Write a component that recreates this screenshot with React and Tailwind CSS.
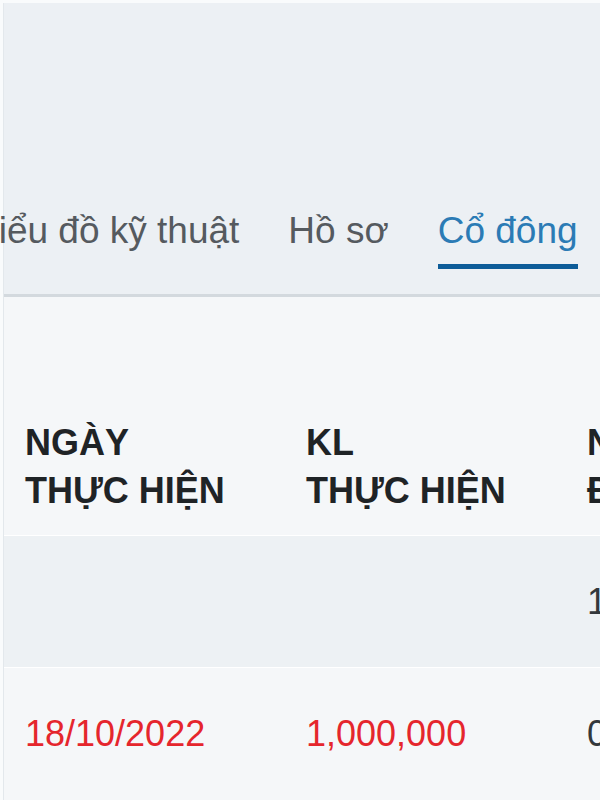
import React from 'react'

const tabs = [
  { label: 'Biểu đồ kỹ thuật', active: false },
  { label: 'Hồ sơ', active: false },
  { label: 'Cổ đông', active: true },
]

const rows = [
  { date: '', volume: '', extra: '1' },
  { date: '18/10/2022', volume: '1,000,000', extra: '0' },
]

const App = () => {
  return (
    <div className="w-[600px] h-[800px] overflow-hidden bg-[#f9fbfc] pt-[3px] pl-[3px] font-['Liberation_Sans',Arial,sans-serif]">
      <div className="border-l border-[#e3e8ec] h-full flex flex-col">
        {/* tabs */}
        <div className="bg-[#ecf0f4] pt-[208px] pb-[25px] border-b-[3px] border-[#d3d9de]">
          <div className="flex items-start gap-[49px] ml-[-30px] whitespace-nowrap">
            {tabs.map((tab) => (
              <div key={tab.label} className="flex flex-col">
                <span
                  className={`text-[37px] leading-[40px] ${tab.active ? 'text-[#2b7bb5]' : 'text-[#555a5f]'}`}
                >
                  {tab.label}
                </span>
                <div className={`mt-[13px] h-[5px] ${tab.active ? 'bg-[#0d5c98]' : 'bg-transparent'}`} />
              </div>
            ))}
          </div>
        </div>

        {/* table */}
        <div className="flex-1 bg-[#f5f7f9]">
          <div className="grid grid-cols-[281px_281px_281px] pt-[122px] pb-[20px] pl-[21px] text-[36px] leading-[48px] font-bold text-[#1f2326] whitespace-nowrap">
            <div>
              NGÀY
              <br />
              THỰC HIỆN
            </div>
            <div>
              KL
              <br />
              THỰC HIỆN
            </div>
            <div>
              NGÀY
              <br />
              ĐĂNG KÝ
            </div>
          </div>
          {rows.map((row, idx) => (
            <div
              key={idx}
              className={`grid grid-cols-[281px_281px_281px] items-center pl-[21px] h-[132px] border-t border-white text-[36px] whitespace-nowrap ${idx % 2 === 0 ? 'bg-[#edf1f4]' : 'bg-[#f5f7f9]'}`}
            >
              <div className="text-[#e5262d]">{row.date}</div>
              <div className="text-[#e5262d]">{row.volume}</div>
              <div className="text-[#33383c]">{row.extra}</div>
            </div>
          ))}
        </div>
      </div>
    </div>
  )
}

export default App
